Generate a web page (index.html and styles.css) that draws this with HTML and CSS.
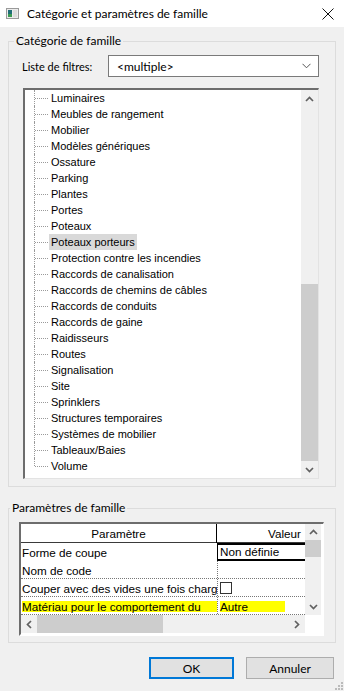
FILE: index.html
```html
<!DOCTYPE html>
<html lang="fr">
<head>
  <meta charset="UTF-8">
  <meta name="viewport" content="width=device-width, initial-scale=1.0">
  <title>Catégorie et paramètres de famille</title>
  <link rel="stylesheet" href="styles.css">
</head>
<body>

  <div class="dialog">
    <div class="titlebar">
      <svg class="app-icon" width="13" height="11" viewBox="0 0 13 11">
        <rect x="0.5" y="0.5" width="12" height="10" fill="#ececec" stroke="#9a9a9a"/>
        <rect x="2" y="2" width="4" height="7" fill="#1f6e78"/>
        <rect x="2" y="6" width="4" height="3" fill="#3c9a52"/>
        <rect x="7" y="2" width="4" height="7" fill="#dcdcdc"/>
      </svg>
      <span class="title">Catégorie et paramètres de famille</span>
      <svg class="close-icon" width="12" height="12" viewBox="0 0 12 12">
        <path d="M0.5 0.5L11.5 11.5M11.5 0.5L0.5 11.5" stroke="#111" stroke-width="1"/>
      </svg>
    </div>

    <fieldset class="group group-category">
      <legend>Catégorie de famille</legend>

      <div class="filter-row">
        <label>Liste de filtres:</label>
        <div class="combo">
          <span>&lt;multiple&gt;</span>
          <svg width="9" height="6" viewBox="0 0 9 6"><polyline points="0.5,0.8 4.5,4.8 8.5,0.8" fill="none" stroke="#555" stroke-width="1"/></svg>
        </div>
      </div>

      <div class="tree">
        <ul class="tree-items">
          <li><span>Luminaires</span></li>
          <li><span>Meubles de rangement</span></li>
          <li><span>Mobilier</span></li>
          <li><span>Modèles génériques</span></li>
          <li><span>Ossature</span></li>
          <li><span>Parking</span></li>
          <li><span>Plantes</span></li>
          <li><span>Portes</span></li>
          <li><span>Poteaux</span></li>
          <li class="selected"><span>Poteaux porteurs</span></li>
          <li><span>Protection contre les incendies</span></li>
          <li><span>Raccords de canalisation</span></li>
          <li><span>Raccords de chemins de câbles</span></li>
          <li><span>Raccords de conduits</span></li>
          <li><span>Raccords de gaine</span></li>
          <li><span>Raidisseurs</span></li>
          <li><span>Routes</span></li>
          <li><span>Signalisation</span></li>
          <li><span>Site</span></li>
          <li><span>Sprinklers</span></li>
          <li><span>Structures temporaires</span></li>
          <li><span>Systèmes de mobilier</span></li>
          <li><span>Tableaux/Baies</span></li>
          <li><span>Volume</span></li>
        </ul>
        <div class="vscroll tree-scroll">
          <div class="sb-btn">
            <svg width="9" height="6" viewBox="0 0 9 6"><polyline points="1,5 4.5,1.5 8,5" fill="none" stroke="#606060" stroke-width="1.7"/></svg>
          </div>
          <div class="sb-track"><div class="sb-thumb"></div></div>
          <div class="sb-btn">
            <svg width="9" height="6" viewBox="0 0 9 6"><polyline points="1,1 4.5,4.5 8,1" fill="none" stroke="#606060" stroke-width="1.7"/></svg>
          </div>
        </div>
      </div>
    </fieldset>

    <fieldset class="group group-params">
      <legend>Paramètres de famille</legend>

      <div class="grid">
        <div class="grid-table">
          <div class="grid-head">
            <div class="cell head-param">Paramètre</div>
            <div class="cell head-value">Valeur</div>
          </div>
          <div class="grid-row first-row">
            <div class="cell">Forme de coupe</div>
            <div class="cell value editing">Non définie</div>
          </div>
          <div class="grid-row">
            <div class="cell">Nom de code</div>
            <div class="cell value"></div>
          </div>
          <div class="grid-row">
            <div class="cell">Couper avec des vides une fois charg</div>
            <div class="cell value"><span class="checkbox"></span></div>
          </div>
          <div class="grid-row">
            <div class="cell"><span class="mark mark-wide">Matériau pour le comportement du</span></div>
            <div class="cell value"><span class="mark mark-short">Autre</span></div>
          </div>
        </div>

        <div class="vscroll grid-vscroll">
          <div class="sb-btn">
            <svg width="9" height="6" viewBox="0 0 9 6"><polyline points="1,5 4.5,1.5 8,5" fill="none" stroke="#606060" stroke-width="1.7"/></svg>
          </div>
          <div class="sb-track"><div class="sb-thumb"></div></div>
          <div class="sb-btn">
            <svg width="9" height="6" viewBox="0 0 9 6"><polyline points="1,1 4.5,4.5 8,1" fill="none" stroke="#606060" stroke-width="1.7"/></svg>
          </div>
        </div>

        <div class="hscroll">
          <div class="sb-btn">
            <svg width="6" height="9" viewBox="0 0 6 9"><polyline points="5,1 1.5,4.5 5,8" fill="none" stroke="#606060" stroke-width="1.7"/></svg>
          </div>
          <div class="sb-track"><div class="sb-thumb"></div></div>
          <div class="sb-btn">
            <svg width="6" height="9" viewBox="0 0 6 9"><polyline points="1,1 4.5,4.5 1,8" fill="none" stroke="#606060" stroke-width="1.7"/></svg>
          </div>
        </div>
        <div class="corner"></div>
      </div>
    </fieldset>

    <div class="buttons">
      <button class="btn btn-default">OK</button>
      <button class="btn">Annuler</button>
    </div>

    <svg class="size-grip" width="8" height="8" viewBox="0 0 8 8">
      <rect x="6" y="0" width="2" height="2" fill="#bbb"/>
      <rect x="3" y="3" width="2" height="2" fill="#bbb"/>
      <rect x="6" y="3" width="2" height="2" fill="#bbb"/>
      <rect x="0" y="6" width="2" height="2" fill="#bbb"/>
      <rect x="3" y="6" width="2" height="2" fill="#bbb"/>
      <rect x="6" y="6" width="2" height="2" fill="#bbb"/>
    </svg>
  </div>

</body>
</html>
```

FILE: styles.css
```css
/* General Styles */
body {
  margin: 0;
  padding: 0;
  background-color: #f0f0f0;
  font-family: Lato, 'Noto Sans', sans-serif;
  font-size: 12px;
  color: #000;
}

.dialog {
  position: relative;
  width: 344px;
  height: 691px;
  overflow: hidden;
}

/* Title bar */
.titlebar {
  height: 27px;
  background-color: #fff;
  display: flex;
  align-items: center;
  padding: 0 10px 0 6px;
}

.app-icon {
  margin-right: 8px;
}

.title {
  flex: 1;
  line-height: 14px;
}

.close-icon {
  margin-top: 1px;
}

/* Group boxes */
.group {
  margin: 7px 8px 0;
  border: 1px solid #dcdcdc;
  min-width: 0;
}

.group legend {
  padding: 0 2px;
  margin-left: -9px;
  line-height: 14px;
}

.group-category {
  padding: 7px 16px 7px 14px;
}

.group-params {
  margin-top: 14px;
  padding: 7px 11px 6px 10px;
}

/* Filter list */
.filter-row {
  display: flex;
  align-items: center;
  height: 22px;
}

.filter-row label {
  margin-left: -1px;
  font-size: 11px;
}

.combo {
  margin-left: auto;
  width: 211px;
  height: 22px;
  box-sizing: border-box;
  border: 1px solid #7a7a7a;
  background-color: #fff;
  display: flex;
  align-items: center;
  justify-content: space-between;
  padding: 0 7px 0 8px;
}

/* Tree list */
.tree {
  margin-top: 11px;
  display: flex;
  height: 391px;
  box-sizing: border-box;
  border-top: 2px solid #6d6d6d;
  border-left: 2px solid #6d6d6d;
  border-right: 1px solid #e3e3e3;
  border-bottom: 1px solid #e3e3e3;
  background-color: #fff;
}

.tree-items {
  flex: 1;
  list-style: none;
  margin: 0;
  padding: 0;
  font-family: 'Liberation Sans', sans-serif;
  font-size: 11px;
  overflow: hidden;
}

.tree-items li {
  position: relative;
  height: 16px;
  line-height: 16px;
  padding-left: 26px;
  white-space: nowrap;
}

.tree-items li::before {
  content: '';
  position: absolute;
  left: 9px;
  top: 0;
  bottom: 0;
  border-left: 1px dotted #9a9a9a;
}

.tree-items li:last-child::before {
  bottom: 8px;
}

.tree-items li::after {
  content: '';
  position: absolute;
  left: 10px;
  top: 8px;
  width: 13px;
  border-top: 1px dotted #9a9a9a;
}

.tree-items li span {
  padding: 0 2px;
  margin-left: -2px;
}

.tree-items li.selected span {
  display: inline-block;
  background-color: #d9d9d9;
  line-height: 16px;
}

/* Scrollbars */
.vscroll {
  width: 17px;
  display: flex;
  flex-direction: column;
  background-color: #f0f0f0;
}

.sb-btn {
  flex: 0 0 17px;
  display: flex;
  align-items: center;
  justify-content: center;
}

.sb-track {
  flex: 1;
  display: flex;
  flex-direction: column;
  justify-content: flex-end;
}

.sb-thumb {
  background-color: #cdcdcd;
}

.tree-scroll .sb-thumb {
  height: 177px;
}

.grid-vscroll {
  width: 16px;
}

.grid-vscroll .sb-btn {
  flex-basis: 16px;
}

.grid-vscroll .sb-track {
  justify-content: flex-start;
}

.grid-vscroll .sb-thumb {
  height: 17px;
}

.hscroll {
  display: flex;
  background-color: #f0f0f0;
}

.hscroll .sb-btn {
  flex-basis: 16px;
}

.hscroll .sb-track {
  flex-direction: row;
  justify-content: flex-start;
  align-items: stretch;
}

.hscroll .sb-thumb {
  width: 126px;
}

/* Property grid */
.grid {
  display: grid;
  grid-template-columns: 284px 16px;
  grid-template-rows: 91px 18px;
  height: 114px;
  box-sizing: border-box;
  border-top: 2px solid #6d6d6d;
  border-left: 2px solid #6d6d6d;
  border-right: 1px solid #fff;
  border-bottom: 2px solid #fff;
  background-color: #fff;
  font-family: 'Liberation Sans', sans-serif;
  font-size: 11.7px;
}

.grid-table {
  overflow: hidden;
}

.grid-head,
.grid-row {
  display: grid;
  grid-template-columns: 196px 150px;
}

.grid-head {
  height: 19px;
  box-sizing: border-box;
  border-bottom: 1px solid #3a3a3a;
  line-height: 19px;
}

.head-param {
  text-align: center;
  border-right: 1px solid #000;
}

.head-value {
  width: 84px;
  text-align: right;
}

.grid-row {
  height: 18px;
  box-sizing: border-box;
  border-bottom: 1px dotted #777;
  line-height: 15px;
}

.grid-row .cell {
  padding-left: 1px;
  padding-top: 2px;
  white-space: nowrap;
  overflow: hidden;
}

.grid-row .value {
  border-left: 1px dotted #777;
  padding-left: 2px;
}

.first-row {
  border-bottom: none;
}

.grid-row .editing {
  border-top: 2px solid #000;
  border-bottom: 2px solid #000;
  border-left: 1px solid #000;
  padding-top: 0;
  line-height: 14px;
}

.checkbox {
  display: inline-block;
  width: 12px;
  height: 12px;
  box-sizing: border-box;
  border: 1px solid #333;
  vertical-align: top;
  margin-top: 1px;
}

.grid-row .cell .mark {
  display: block;
  margin-top: 2px;
  height: 11px;
  line-height: 11px;
  background-color: #ffff00;
}

.grid-row .cell .mark-short {
  width: 65px;
}

.corner {
  background-color: #fff;
}

/* Buttons */
.buttons {
  display: flex;
  justify-content: flex-end;
  gap: 12px;
  margin-top: 14px;
  padding-right: 10px;
}

.btn {
  height: 22px;
  width: 88px;
  background-color: #e1e1e1;
  border: 1px solid #adadad;
  font-family: Lato, 'Noto Sans', sans-serif;
  font-size: 12px;
  color: #000;
  padding: 0;
}

.btn-default {
  width: 85px;
  border: 2px solid #0078d7;
}

.size-grip {
  position: absolute;
  right: 1px;
  bottom: 1px;
}
```
